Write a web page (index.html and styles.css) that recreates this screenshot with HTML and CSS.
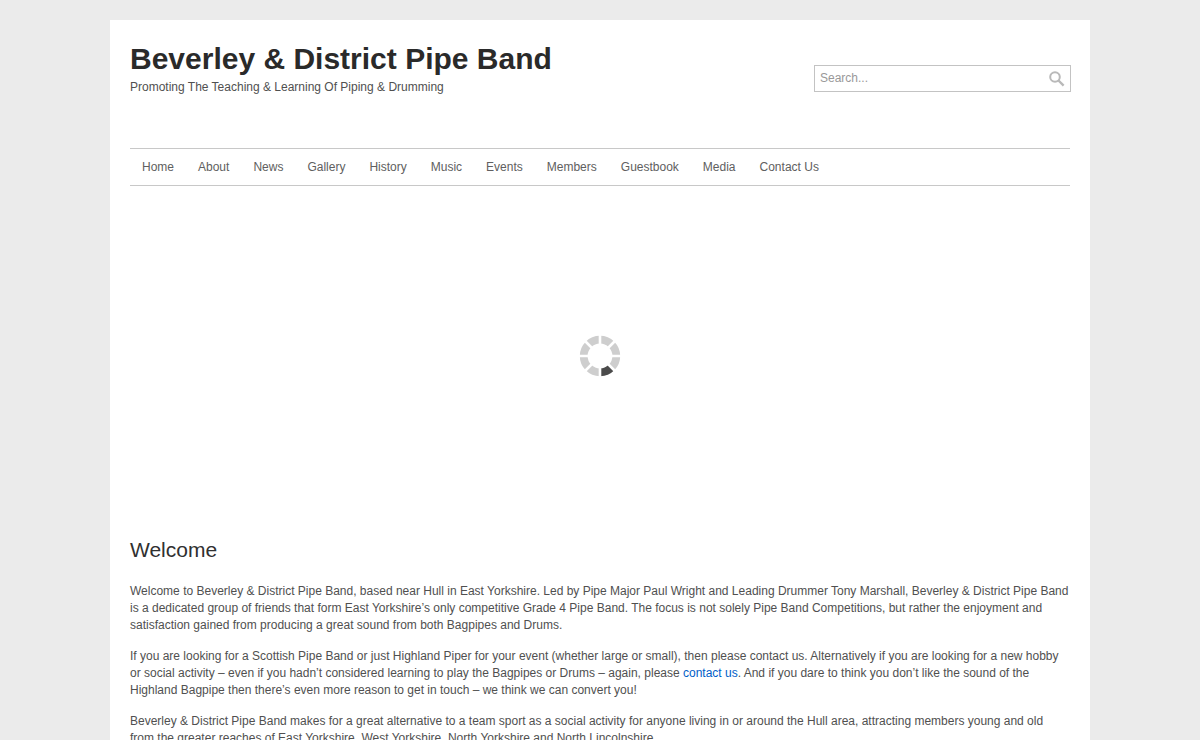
FILE: index.html
```html
<!DOCTYPE html>
<html lang="en">
<head>
<meta charset="utf-8">
<title>Beverley &amp; District Pipe Band</title>
<meta name="viewport" content="width=device-width, initial-scale=1">
<link rel="stylesheet" href="styles.css">
</head>
<body>
<div class="page">
  <header class="header">
    <div class="brand">
      <h1 class="site-title">Beverley &amp; District Pipe Band</h1>
      <p class="tagline">Promoting The Teaching &amp; Learning Of Piping &amp; Drumming</p>
    </div>
    <form class="search" role="search">
      <input class="search-input" type="text" placeholder="Search..." aria-label="Search">
      <button class="search-button" type="submit" aria-label="Search">
        <svg width="16" height="16" viewBox="0 0 16 16" fill="none" stroke="#b9b9b9" aria-hidden="true">
          <circle cx="6" cy="6" r="4.8" stroke-width="2"/>
          <path d="M9.5 9.5L14.6 14.6" stroke-width="2.4"/>
        </svg>
      </button>
    </form>
  </header>
  <nav class="nav">
    <a href="#">Home</a>
    <a href="#">About</a>
    <a href="#">News</a>
    <a href="#">Gallery</a>
    <a href="#">History</a>
    <a href="#">Music</a>
    <a href="#">Events</a>
    <a href="#">Members</a>
    <a href="#">Guestbook</a>
    <a href="#">Media</a>
    <a href="#">Contact Us</a>
  </nav>
  <div class="slider">
    <svg width="42" height="42" viewBox="-21 -21 42 42" fill="none" role="img" aria-label="Loading">
      <circle r="16.3" stroke="#cecece" stroke-width="7.8"/>
      <path d="M0 16.3A16.3 16.3 0 0 0 11.526 11.526" stroke="#4b4b4b" stroke-width="7.8"/>
      <path d="M0-21V21M-21 0H21M-15-15L15 15M-15 15L15-15" stroke="#fff" stroke-width="2.6"/>
    </svg>
  </div>
  <main class="content">
    <h2 class="heading">Welcome</h2>
    <p>Welcome to Beverley &amp; District Pipe Band, based near Hull in East Yorkshire. Led by Pipe Major Paul Wright and Leading Drummer Tony Marshall, Beverley &amp; District Pipe Band is a dedicated group of friends that form East Yorkshire’s only competitive Grade 4 Pipe Band. The focus is not solely Pipe Band Competitions, but rather the enjoyment and satisfaction gained from producing a great sound from both Bagpipes and Drums.</p>
    <p>If you are looking for a Scottish Pipe Band or just Highland Piper for your event (whether large or small), then please contact us. Alternatively if you are looking for a new hobby or social activity – even if you hadn’t considered learning to play the Bagpipes or Drums – again, please <a href="#">contact us</a>. And if you dare to think you don’t like the sound of the Highland Bagpipe then there’s even more reason to get in touch – we think we can convert you!</p>
    <p>Beverley &amp; District Pipe Band makes for a great alternative to a team sport as a social activity for anyone living in or around the Hull area, attracting members young and old from the greater reaches of East Yorkshire, West Yorkshire, North Yorkshire and North Lincolnshire.</p>
  </main>
</div>
</body>
</html>
```
FILE: styles.css
```css
* {
  box-sizing: border-box;
}

body {
  margin: 0;
  padding: 20px;
  background: #ebebeb;
  color: #505050;
  font: 12px/17px "Liberation Sans", Arial, sans-serif;
}

.page {
  max-width: 980px;
  margin: 0 auto;
  padding: 20px;
  background: #fff;
}

.header {
  display: flex;
  justify-content: space-between;
  align-items: flex-start;
  gap: 20px;
  padding-bottom: 52px;
}

.site-title {
  margin: 0;
  color: #2a2a2a;
  font-size: 30px;
  line-height: 38px;
}

.tagline {
  margin: 0;
  line-height: 18px;
}

.search {
  display: flex;
  align-items: center;
  width: 257px;
  margin-top: 25px;
  margin-right: -1px;
  border: 1px solid #c3c3c3;
}

.search-input {
  flex: 1;
  min-width: 0;
  height: 25px;
  padding: 0 5px 2px;
  border: 0;
  background: none;
  color: #505050;
  font: inherit;
}

.search-input::placeholder {
  color: #999;
  opacity: 1;
}

.search-button {
  display: flex;
  padding: 0 5px;
  border: 0;
  background: none;
  cursor: pointer;
}

.nav {
  display: flex;
  flex-wrap: wrap;
  gap: 0 24px;
  padding: 0 12px;
  border-top: 1px solid #c8c8c8;
  border-bottom: 1px solid #c8c8c8;
}

.nav a {
  color: #606060;
  line-height: 36px;
  text-decoration: none;
}

.slider {
  display: flex;
  align-items: center;
  justify-content: center;
  height: 340px;
}

.heading {
  margin: 10px 0 19px;
  color: #303030;
  font-size: 21px;
  font-weight: 400;
  line-height: 28px;
}

.content p {
  margin: 0 0 14px;
}

.content a {
  color: #0060c8;
  text-decoration: none;
}
```
